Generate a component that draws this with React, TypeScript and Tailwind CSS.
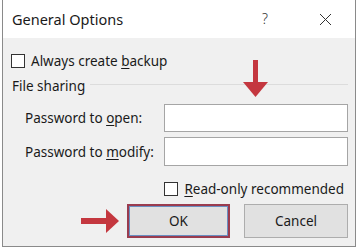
const red = "#c4373f";

function Check() {
  return <span className="h-[14px] w-[14px] shrink-0 border border-[#333] bg-white" />;
}

export default function App() {
  return (
    <div className="relative h-[249px] w-[357px] bg-white font-['Noto_Sans',sans-serif] text-[13.5px] leading-[20px] text-[#1a1a1a]">
      <div className="ml-[2px] flex h-[247px] w-[354px] flex-col border-x border-b border-[#8a8a8a]">
        {/* title bar */}
        <div className="flex h-[38px] shrink-0 items-center bg-white pl-[9px] pr-[23px]">
          <span className="text-[14.5px]">General Options</span>
          <span className="ml-auto mr-[51px] text-[14px] font-light text-[#333]">?</span>
          <svg width="13" height="13" viewBox="0 0 13 13">
            <path d="M1 1L12 12M12 1L1 12" stroke="#333" strokeWidth="1" />
          </svg>
        </div>

        <div className="flex flex-1 flex-col bg-[#f0f0f0] pl-[8px] pr-[7px]">
          <label className="mt-[16px] flex h-[14px] items-center gap-[6px] whitespace-nowrap">
            <Check />
            <span>
              Always create <u className="underline-offset-2">b</u>ackup
            </span>
          </label>

          <div className="mt-[8px] flex h-[20px] items-center">
            <span className="ml-[1px]">File sharing</span>
            <span className="ml-[5px] mt-[-3px] h-px flex-1 bg-[#dcdcdc]" />
          </div>

          <div className="mt-[8px] flex h-[28px] items-center pl-[14px]">
            <span className="flex-1 whitespace-nowrap">
              Password to <u className="underline-offset-2">o</u>pen:
            </span>
            <span className="h-full w-[184px] border border-[#a5a5a5] bg-white" />
          </div>
          <div className="mt-[5px] flex h-[29px] items-center pl-[14px]">
            <span className="flex-1 whitespace-nowrap">
              Password to <u className="underline-offset-2">m</u>odify:
            </span>
            <span className="h-full w-[184px] border border-[#a5a5a5] bg-white" />
          </div>

          <label className="mt-[16px] flex h-[14px] items-center justify-end gap-[6px] whitespace-nowrap pr-[4px]">
            <Check />
            <span>
              <u className="underline-offset-2">R</u>ead-only recommended
            </span>
          </label>

          <div className="mt-[8px] flex justify-end gap-[14px]">
            <button className="h-[34px] w-[103px] border-2 border-[#9a3c4f] bg-[#e1e1e1] shadow-[inset_0_0_0_1px_#6a8fc2]">
              OK
            </button>
            <button className="h-[34px] w-[104px] border border-[#adadad] bg-[#e1e1e1]">
              Cancel
            </button>
          </div>
        </div>
      </div>

      {/* annotation arrows */}
      <svg className="absolute left-[243px] top-[60px]" width="26" height="38" viewBox="0 0 26 38">
        <rect x="10" y="0" width="5" height="23" fill={red} />
        <path d="M0 22H25L12.5 37Z" fill={red} />
      </svg>
      <svg className="absolute left-[81px] top-[209px]" width="39" height="25" viewBox="0 0 39 25">
        <rect x="0" y="9" width="26" height="6" fill={red} />
        <path d="M25 0V24L38 12Z" fill={red} />
      </svg>
    </div>
  );
}
